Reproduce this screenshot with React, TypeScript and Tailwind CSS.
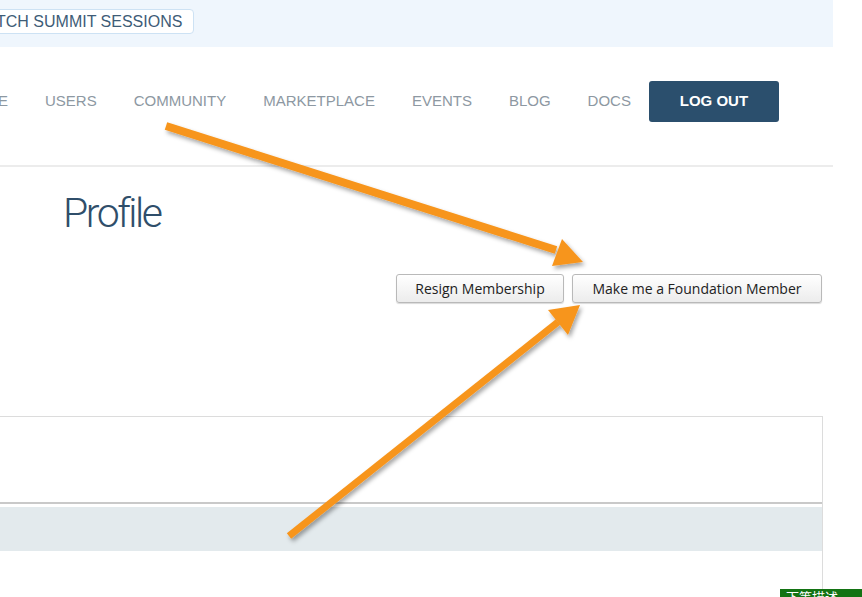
import { ReactNode } from 'react'

const navItems = ['HOME', 'USERS', 'COMMUNITY', 'MARKETPLACE', 'EVENTS', 'BLOG', 'DOCS']

function GreyButton({ children, className = '' }: { children: ReactNode; className?: string }) {
    return (
        <button
            className={`h-[29px] rounded-[3px] border border-[#b9b9b9] bg-gradient-to-b from-white to-[#ececec] text-[14px] text-[#222] shadow-[0_1px_1px_rgba(0,0,0,0.15)] font-['Open_Sans',sans-serif] ${className}`}
        >
            {children}
        </button>
    )
}

function Arrows() {
    // orange callout arrows drawn over the page
    return (
        <svg className="pointer-events-none absolute inset-0" width="862" height="597" viewBox="0 0 862 597">
            <defs>
                <filter id="shadow" x="-20%" y="-20%" width="140%" height="140%">
                    <feDropShadow dx="2" dy="3" stdDeviation="2" floodColor="#000" floodOpacity="0.35" />
                </filter>
            </defs>
            <g filter="url(#shadow)" fill="#f7951d" stroke="none">
                <line x1="166" y1="126" x2="556" y2="250" stroke="#f7951d" strokeWidth="8" />
                <polygon points="583,262 552,266 562,239" />
                <line x1="289" y1="536" x2="558" y2="322" stroke="#f7951d" strokeWidth="7" />
                <polygon points="580,305 568,335 548,310" />
            </g>
        </svg>
    )
}

export default function App() {
    return (
        <div className="relative h-[597px] w-[862px] overflow-hidden bg-white font-['Liberation_Sans',Arial,sans-serif]">
            {/* top banner */}
            <div className="flex h-[47px] w-[833px] items-start bg-[#eff6fd] pt-[9px]">
                <div className="ml-[-40px] flex h-[25px] items-center rounded-[4px] border border-[#cde2f4] bg-white pl-[11px] pr-[11px] text-[16px] text-[#3e5c77]">
                    WATCH SUMMIT SESSIONS
                </div>
            </div>

            {/* nav */}
            <div className="flex h-[118px] w-[833px] items-start pt-[34px]">
                <div className="ml-[-37px] flex h-[41px] items-center gap-[37px] text-[15px] text-[#8d98a2]">
                    {navItems.map(item => (
                        <span key={item}>{item}</span>
                    ))}
                </div>
                <button className="ml-[18px] h-[41px] w-[130px] rounded-[3px] bg-[#2b4f6d] text-[15px] font-bold text-white">
                    LOG OUT
                </button>
            </div>
            <div className="h-[2px] w-[833px] bg-[#ececec]" />

            {/* heading */}
            <div className="pl-[63px] pt-[26px]">
                <h1 className="text-[41px] leading-none font-light tracking-[-2.5px] text-[#2f4e6a] font-['Roboto',sans-serif]">
                    Profile
                </h1>
            </div>

            {/* membership actions */}
            <div className="mt-[40px] flex justify-end gap-[8px] pr-[40px]">
                <GreyButton className="w-[168px]">Resign Membership</GreyButton>
                <GreyButton className="w-[250px]">Make me a Foundation Member</GreyButton>
            </div>

            {/* panel */}
            <div className="mt-[113px] mr-[39px] ml-[-1px] border-t border-r border-[#dcdcdc]">
                <div className="h-[85px]" />
                <div className="h-[2px] bg-[#c9c9c9]" />
                <div className="h-[3px] bg-white" />
                <div className="h-[44px] bg-[#e3eaed]" />
                <div className="h-[60px]" />
            </div>

            {/* watermark badge */}
            <div className="absolute top-[589px] left-[780px] h-[12px] w-[82px] overflow-hidden bg-[#137313] pl-[6px] text-[13px] leading-[16px] text-white font-['Noto_Sans_CJK_SC',sans-serif]">
                下等描述
            </div>

            <Arrows />
        </div>
    )
}
